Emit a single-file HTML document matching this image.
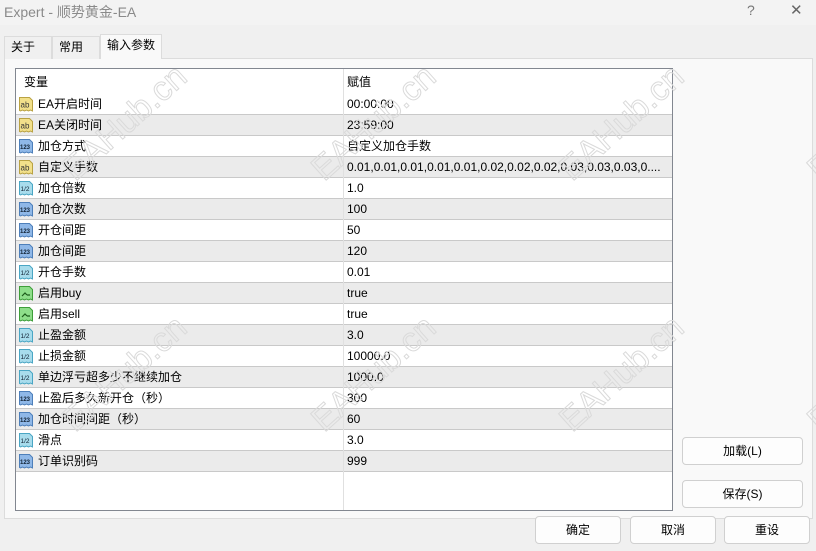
<!DOCTYPE html>
<html><head><meta charset="utf-8"><style>
*{margin:0;padding:0;box-sizing:border-box}
body{width:816px;height:551px;background:#f0f0f0;font-family:"Liberation Sans","Noto Sans CJK SC",sans-serif;font-size:12px;color:#000;position:relative;overflow:hidden}
.title{position:absolute;left:0;top:0;width:816px;height:25px;background:#f3f3f3;color:#8a8a8a;font-size:14px}
.title span{position:absolute;left:4px;top:2px}
.q{position:absolute;left:747px;top:2px;color:#777}
.x{position:absolute;left:790px;top:1px;font-size:15px;color:#666}
.tab{position:absolute;top:36px;height:23px;border:1px solid #dcdcdc;border-bottom:none;background:#f0f0f0;padding:0 0 0 6px;line-height:21px;font-size:12px}
.panel{position:absolute;left:4px;top:58px;width:809px;height:461px;background:#f9f9f9;border:1px solid #dcdcdc}
.tbl{position:absolute;left:15px;top:68px;width:658px;height:443px;background:#fff;border:1px solid #828790;overflow:hidden}
.row{position:absolute;left:0;width:656px;height:21px;border-bottom:1px solid #c9c9c9}
.row.g{background:#ebebeb}
.n,.v{position:absolute;top:0;height:20px;line-height:20px;white-space:nowrap}
.n{left:22px}
.v{left:331px}
.col{position:absolute;left:327px;top:0;width:1px;height:441px;background:#e0e0e0}
.ic{position:absolute;left:2px;top:2px;width:16px;height:16px}
.btn{position:absolute;background:#fdfdfd;border:1px solid #d0d0d0;border-radius:4px;text-align:center;line-height:26px;font-size:12px}
.wm{position:absolute;font-size:34px;font-family:"Liberation Sans",sans-serif;color:transparent;-webkit-text-stroke:1px #dadada;transform:translate(-50%,-50%) rotate(-42deg);white-space:nowrap;pointer-events:none}
</style></head><body>
<div class="title"><span>Expert - 顺势黄金-EA</span><div class="q">?</div><div class="x">✕</div></div>
<div class="panel"></div>
<div class="tab" style="left:4px;width:48px">关于</div>
<div class="tab" style="left:52px;width:48px">常用</div>
<div class="tab" style="left:100px;top:34px;width:62px;height:25px;background:#f9f9f9;">输入参数</div>
<svg width="0" height="0" style="position:absolute">
<defs>
<symbol id="ab" viewBox="0 0 16 16"><path d="M1.5 1.5h10l3 3v10.5l-2-1-2 1-2-1-2 1-2-1-2 1-1-.5z" fill="#f2e08a" stroke="#b9a243"/><text x="2.5" y="11.5" font-size="8" font-family="Liberation Sans" fill="#333">ab</text></symbol>
<symbol id="n" viewBox="0 0 16 16"><path d="M1.5 1.5h10l3 3v10.5l-2-1-2 1-2-1-2 1-2-1-2 1-1-.5z" fill="#8fb8e8" stroke="#4d7fba"/><text x="2" y="11" font-size="6" font-weight="bold" font-family="Liberation Sans" fill="#123">123</text></symbol>
<symbol id="h" viewBox="0 0 16 16"><path d="M1.5 1.5h10l3 3v10.5l-2-1-2 1-2-1-2 1-2-1-2 1-1-.5z" fill="#a8dcec" stroke="#4aa6c4"/><text x="2.5" y="11" font-size="6.5" font-family="Liberation Sans" fill="#123">1/2</text></symbol>
<symbol id="b" viewBox="0 0 16 16"><path d="M1.5 1.5h10l3 3v10.5l-2-1-2 1-2-1-2 1-2-1-2 1-1-.5z" fill="#8ede8a" stroke="#3e9e3a"/><path d="M4 11l3-3 2 2M9 10h3" stroke="#1c5a1a" stroke-width="1.2" fill="none"/></symbol>
</defs></svg>
<div class="tbl">
<div class="row" style="top:0;height:25px;border:none"><span class="n" style="left:8px;top:3px">变量</span><span class="v" style="top:3px">赋值</span></div>
<div class="row" style="top:25px"><svg class="ic"><use href="#ab"/></svg><span class="n">EA开启时间</span><span class="v">00:00:00</span></div>
<div class="row g" style="top:46px"><svg class="ic"><use href="#ab"/></svg><span class="n">EA关闭时间</span><span class="v">23:59:00</span></div>
<div class="row" style="top:67px"><svg class="ic"><use href="#n"/></svg><span class="n">加仓方式</span><span class="v">自定义加仓手数</span></div>
<div class="row g" style="top:88px"><svg class="ic"><use href="#ab"/></svg><span class="n">自定义手数</span><span class="v">0.01,0.01,0.01,0.01,0.01,0.02,0.02,0.02,0.03,0.03,0.03,0....</span></div>
<div class="row" style="top:109px"><svg class="ic"><use href="#h"/></svg><span class="n">加仓倍数</span><span class="v">1.0</span></div>
<div class="row g" style="top:130px"><svg class="ic"><use href="#n"/></svg><span class="n">加仓次数</span><span class="v">100</span></div>
<div class="row" style="top:151px"><svg class="ic"><use href="#n"/></svg><span class="n">开仓间距</span><span class="v">50</span></div>
<div class="row g" style="top:172px"><svg class="ic"><use href="#n"/></svg><span class="n">加仓间距</span><span class="v">120</span></div>
<div class="row" style="top:193px"><svg class="ic"><use href="#h"/></svg><span class="n">开仓手数</span><span class="v">0.01</span></div>
<div class="row g" style="top:214px"><svg class="ic"><use href="#b"/></svg><span class="n">启用buy</span><span class="v">true</span></div>
<div class="row" style="top:235px"><svg class="ic"><use href="#b"/></svg><span class="n">启用sell</span><span class="v">true</span></div>
<div class="row g" style="top:256px"><svg class="ic"><use href="#h"/></svg><span class="n">止盈金额</span><span class="v">3.0</span></div>
<div class="row" style="top:277px"><svg class="ic"><use href="#h"/></svg><span class="n">止损金额</span><span class="v">10000.0</span></div>
<div class="row g" style="top:298px"><svg class="ic"><use href="#h"/></svg><span class="n">单边浮亏超多少不继续加仓</span><span class="v">1000.0</span></div>
<div class="row" style="top:319px"><svg class="ic"><use href="#n"/></svg><span class="n">止盈后多久新开仓（秒）</span><span class="v">300</span></div>
<div class="row g" style="top:340px"><svg class="ic"><use href="#n"/></svg><span class="n">加仓时间间距（秒）</span><span class="v">60</span></div>
<div class="row" style="top:361px"><svg class="ic"><use href="#h"/></svg><span class="n">滑点</span><span class="v">3.0</span></div>
<div class="row g" style="top:382px"><svg class="ic"><use href="#n"/></svg><span class="n">订单识别码</span><span class="v">999</span></div>
<div class="col"></div>
</div>
<div class="btn" style="left:682px;top:437px;width:121px;height:28px">加载(L)</div>
<div class="btn" style="left:682px;top:480px;width:121px;height:28px">保存(S)</div>
<div class="btn" style="left:535px;top:516px;width:86px;height:28px">确定</div>
<div class="btn" style="left:630px;top:516px;width:86px;height:28px">取消</div>
<div class="btn" style="left:724px;top:516px;width:86px;height:28px">重设</div>
<div class="wm" style="left:125px;top:123px">EAHub.cn</div>
<div class="wm" style="left:374px;top:123px">EAHub.cn</div>
<div class="wm" style="left:622px;top:123px">EAHub.cn</div>
<div class="wm" style="left:870px;top:123px">EAHub.cn</div>
<div class="wm" style="left:125px;top:374px">EAHub.cn</div>
<div class="wm" style="left:374px;top:374px">EAHub.cn</div>
<div class="wm" style="left:622px;top:374px">EAHub.cn</div>
<div class="wm" style="left:870px;top:374px">EAHub.cn</div>
</body></html>
